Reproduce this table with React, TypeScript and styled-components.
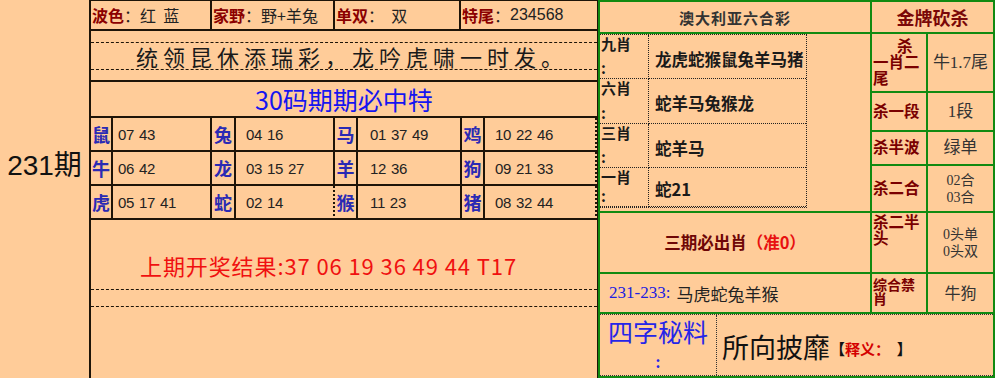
import styled, { createGlobalStyle } from 'styled-components';

const GlobalStyle = createGlobalStyle`
  html, body { margin: 0; padding: 0; background: #ffcc99; }
  *, *::before, *::after { box-sizing: border-box; }
  body { font-family: "Noto Sans CJK SC", "Noto Sans", sans-serif; color: #222; }
`;

const LINE = '#1e1408';
const GREEN = '#118a11';
const SERIF = '"Liberation Serif", "Noto Sans CJK SC", serif';
const SANS = '"Liberation Sans", "Noto Sans CJK SC", sans-serif';

const Page = styled.div`
  display: flex;
  width: 995px;
  height: 378px;
  overflow: hidden;
  background: #ffcc99;
`;

const IssueCol = styled.div`
  width: 89px;
  flex-shrink: 0;
  display: flex;
  align-items: center;
  justify-content: center;
  padding-bottom: 52px;
  font-family: ${SANS};
  font-size: 28px;
  color: #111;
`;

const LeftBlock = styled.div`
  width: 509px;
  flex-shrink: 0;
  display: flex;
  flex-direction: column;
  border-left: 2px solid ${LINE};
  border-top: 1px solid ${LINE};
  border-right: 1px solid ${LINE};
`;

const InfoRow = styled.div`
  display: grid;
  grid-template-columns: 121px 123px 126px 1fr;
  height: 30px;
  border-bottom: 2px solid ${LINE};
`;

const InfoCell = styled.div<{ $last?: boolean }>`
  display: flex;
  align-items: center;
  padding-left: 1px;
  border-right: ${({ $last }) => ($last ? 'none' : `2px solid ${LINE}`)};
  font-size: 16px;
  white-space: nowrap;
  color: #222;
`;

const InfoLabel = styled.span`
  color: #8b0000;
  font-weight: 700;
`;

const InfoValue = styled.span<{ $digits?: boolean }>`
  font-family: ${({ $digits }) => ($digits ? SANS : 'inherit')};
  white-space: pre;
`;

const MottoRow = styled.div`
  height: 51px;
  padding: 11px 0 10px;
  border-bottom: 2px solid ${LINE};
`;

const MottoStrip = styled.div`
  height: 100%;
  border-top: 1px dashed ${LINE};
  border-bottom: 1px dashed ${LINE};
  display: flex;
  align-items: center;
  justify-content: center;
  font-size: 22px;
  letter-spacing: 5px;
  color: #1a1a1a;
  padding-left: 16px;
`;

const TitleRow = styled.div`
  height: 36px;
  border-bottom: 2px solid ${LINE};
  display: flex;
  align-items: center;
  justify-content: center;
  font-size: 25px;
  color: #1515f0;
`;

const ZodiacGrid = styled.div`
  display: grid;
  grid-template-columns: 22px 99px 24px 99px 23px 104px 23px 1fr;
  grid-auto-rows: 34px;
`;

const ZodiacLabel = styled.div`
  display: flex;
  align-items: center;
  justify-content: center;
  border-right: 2px solid ${LINE};
  border-bottom: 2px solid ${LINE};
  font-size: 18px;
  font-weight: 700;
  color: #2a2ab4;
`;

const ZodiacNums = styled.div<{ $pad: number; $dotted?: boolean }>`
  display: flex;
  align-items: center;
  padding-left: ${({ $pad }) => $pad}px;
  border-right: 2px ${({ $dotted }) => ($dotted ? 'dotted' : 'solid')} ${LINE};
  border-bottom: 2px solid ${LINE};
  font-family: ${SANS};
  font-size: 15px;
  letter-spacing: -0.3px;
  word-spacing: 1px;
  color: #222;
  white-space: pre;
`;

const ResultArea = styled.div`
  flex: 1;
  padding-top: 29px;
`;

const ResultText = styled.div`
  height: 32px;
  line-height: 32px;
  padding-left: 49px;
  font-size: 22px;
  color: #f01010;
  letter-spacing: 0.9px;
  white-space: nowrap;
`;

const DashedStrip = styled.div`
  margin-top: 8px;
  height: 18px;
  border-top: 1px dashed ${LINE};
  border-bottom: 1px dashed ${LINE};
`;

/* right side */

const RightBlock = styled.div`
  flex: 1;
  display: grid;
  grid-template-columns: 270px 54px 1fr;
  grid-template-rows: 30px 57px 37px 32px 45px 59px 38px 1fr;
  gap: 2px;
  padding: 2px;
  background: ${GREEN};
`;

const Cell = styled.div<{ $col?: string; $row?: string }>`
  background: #ffcc99;
  grid-column: ${({ $col }) => $col ?? 'auto'};
  grid-row: ${({ $row }) => $row ?? 'auto'};
  min-width: 0;
  overflow: hidden;
`;

const HeaderCell = styled(Cell)<{ $red?: boolean }>`
  display: flex;
  align-items: center;
  justify-content: center;
  font-weight: 700;
  font-size: ${({ $red }) => ($red ? 18 : 15)}px;
  color: ${({ $red }) => ($red ? '#7a0808' : '#333')};
  letter-spacing: ${({ $red }) => ($red ? 0 : 1)}px;
`;

const XiaoCell = styled(Cell)`
  padding-bottom: 3px;
`;

const XiaoTable = styled.div`
  width: 207px;
  height: 100%;
  display: grid;
  grid-template-columns: 49px 1fr;
  grid-template-rows: 44px 45px 44px 1fr;
  border: 1px dotted #222;
  border-left: none;
`;

const XiaoLabel = styled.div`
  display: flex;
  flex-direction: column;
  justify-content: space-between;
  padding: 1px 0 2px 1px;
  border-right: 1px dotted #222;
  border-bottom: 1px dotted #222;
  font-size: 15px;
  font-weight: 700;
  line-height: 16px;
  color: #1a1a1a;
`;

const XiaoValue = styled.div`
  display: flex;
  align-items: center;
  padding: 4px 0 0 6px;
  border-bottom: 1px dotted #222;
  font-size: 16.5px;
  font-weight: 700;
  color: #1a1a1a;
  white-space: nowrap;
`;

const KillLabel = styled(Cell)<{ $small?: boolean }>`
  display: flex;
  flex-direction: column;
  justify-content: center;
  padding-left: 1px;
  font-family: ${SERIF};
  font-weight: 700;
  font-size: ${({ $small }) => ($small ? 14 : 15.5)}px;
  line-height: ${({ $small }) => ($small ? 14 : 16)}px;
  color: #7a0000;
  white-space: nowrap;
`;

const KillTop = styled(KillLabel)`
  justify-content: flex-start;
  padding-top: 2px;
`;

const Indent = styled.span<{ $w: number }>`
  padding-left: ${({ $w }) => $w}px;
`;

const KillValue = styled(Cell)<{ $size?: number }>`
  display: flex;
  flex-direction: column;
  align-items: center;
  justify-content: center;
  font-family: ${SERIF};
  font-size: ${({ $size }) => $size ?? 17}px;
  line-height: ${({ $size }) => ($size ?? 17) + 3}px;
  color: #333;
  white-space: nowrap;
`;

const SureCell = styled(Cell)`
  display: flex;
  align-items: center;
  justify-content: center;
  padding-bottom: 2px;
  font-size: 16.5px;
  font-weight: 700;
  color: #6e0606;
`;

const SureMark = styled.span`
  color: #e81010;
`;

const RangeCell = styled(Cell)`
  display: flex;
  align-items: center;
  padding-left: 9px;
  font-size: 17px;
  color: #222;
  white-space: nowrap;
`;

const RangeNum = styled.span`
  font-family: ${SERIF};
  color: #2020e0;
  margin-right: 6px;
`;

const SecretCell = styled(Cell)`
  display: flex;
  border: 1px dotted #333;
  border-left: none;
  border-right: none;
`;

const SecretLabel = styled.div`
  width: 117px;
  flex-shrink: 0;
  display: flex;
  flex-direction: column;
  align-items: center;
  padding-top: 3px;
  border-right: 1px dotted #333;
  font-size: 25px;
  line-height: 26px;
  color: #2525e8;
`;

const SecretColon = styled.span`
  margin-top: 11px;
  font-size: 15px;
  line-height: 14px;
  font-weight: 700;
`;

const SecretText = styled.div`
  display: flex;
  align-items: center;
  padding: 2px 0 0 5px;
  font-size: 27px;
  color: #111;
  white-space: nowrap;
`;

const Note = styled.span`
  font-size: 15px;
  font-weight: 700;
  color: #d40000;
  white-space: pre;
  margin-top: 4px;
`;

const Bracket = styled.span`
  color: #111;
`;

const zodiacRows: [string, string][][] = [
  [['鼠', '07 43'], ['兔', '04 16'], ['马', '01 37 49'], ['鸡', '10 22 46']],
  [['牛', '06 42'], ['龙', '03 15 27'], ['羊', '12 36'], ['狗', '09 21 33']],
  [['虎', '05 17 41'], ['蛇', '02 14'], ['猴', '11 23'], ['猪', '08 32 44']],
];
const numPad = [5, 10, 12, 10];

const xiao = [
  ['九肖', '龙虎蛇猴鼠兔羊马猪'],
  ['六肖', '蛇羊马兔猴龙'],
  ['三肖', '蛇羊马'],
  ['一肖', '蛇21'],
];

export default function App() {
  return (
    <>
      <GlobalStyle />
      <Page>
        <IssueCol>231期</IssueCol>

        <LeftBlock>
          <InfoRow>
            <InfoCell>
              <InfoLabel>波色</InfoLabel>
              <InfoValue>：红  蓝</InfoValue>
            </InfoCell>
            <InfoCell>
              <InfoLabel>家野</InfoLabel>
              <InfoValue>：野+羊兔</InfoValue>
            </InfoCell>
            <InfoCell>
              <InfoLabel>单双</InfoLabel>
              <InfoValue>：  双</InfoValue>
            </InfoCell>
            <InfoCell $last>
              <InfoLabel>特尾</InfoLabel>
              <InfoValue>：</InfoValue>
              <InfoValue $digits>234568</InfoValue>
            </InfoCell>
          </InfoRow>

          <MottoRow>
            <MottoStrip>统领昆休添瑞彩，龙吟虎啸一时发。</MottoStrip>
          </MottoRow>

          <TitleRow>30码期期必中特</TitleRow>

          <ZodiacGrid>
            {zodiacRows.map((row, r) =>
              row.map(([name, nums], c) => [
                <ZodiacLabel key={`l${r}${c}`}>{name}</ZodiacLabel>,
                <ZodiacNums
                  key={`n${r}${c}`}
                  $pad={numPad[c]}
                  $dotted={(r === 2 && c === 1) || c === 3}
                >
                  {nums}
                </ZodiacNums>,
              ])
            )}
          </ZodiacGrid>

          <ResultArea>
            <ResultText>上期开奖结果:37 06 19 36 49 44 T17</ResultText>
            <DashedStrip />
          </ResultArea>
        </LeftBlock>

        <RightBlock>
          <HeaderCell $col="1" $row="1">澳大利亚六合彩</HeaderCell>
          <HeaderCell $col="2 / 4" $row="1" $red>金牌砍杀</HeaderCell>

          <XiaoCell $col="1" $row="2 / 6">
            <XiaoTable>
              {xiao.map(([label, value]) => [
                <XiaoLabel key={`${label}l`}>
                  <span>{label}</span>
                  <span>:</span>
                </XiaoLabel>,
                <XiaoValue key={`${label}v`}>{value}</XiaoValue>,
              ])}
            </XiaoTable>
          </XiaoCell>

          <KillLabel $col="2" $row="2">
            <Indent $w={24}>杀</Indent>
            <span>一肖二</span>
            <span>尾</span>
          </KillLabel>
          <KillValue $col="3" $row="2">牛1.7尾</KillValue>

          <KillLabel $col="2" $row="3">杀一段</KillLabel>
          <KillValue $col="3" $row="3">1段</KillValue>

          <KillLabel $col="2" $row="4">杀半波</KillLabel>
          <KillValue $col="3" $row="4">绿单</KillValue>

          <KillLabel $col="2" $row="5">杀二合</KillLabel>
          <KillValue $col="3" $row="5" $size={14}>
            <span>02合</span>
            <span>03合</span>
          </KillValue>

          <SureCell $col="1" $row="6">
            三期必出肖<SureMark>（准0）</SureMark>
          </SureCell>
          <KillTop $col="2" $row="6">
            <span>杀二半</span>
            <span>头</span>
          </KillTop>
          <KillValue $col="3" $row="6" $size={14}>
            <span>0头单</span>
            <span>0头双</span>
          </KillValue>

          <RangeCell $col="1" $row="7">
            <RangeNum>231-233:</RangeNum>马虎蛇兔羊猴
          </RangeCell>
          <KillLabel $col="2" $row="7" $small>
            <span>综合禁</span>
            <span>肖</span>
          </KillLabel>
          <KillValue $col="3" $row="7" $size={16}>牛狗</KillValue>

          <SecretCell $col="1 / 4" $row="8">
            <SecretLabel>
              <span>四字秘料</span>
              <SecretColon>:</SecretColon>
            </SecretLabel>
            <SecretText>
              所向披靡
              <Note>
                <Bracket>【</Bracket>释义：  <Bracket>】</Bracket>
              </Note>
            </SecretText>
          </SecretCell>
        </RightBlock>
      </Page>
    </>
  );
}
